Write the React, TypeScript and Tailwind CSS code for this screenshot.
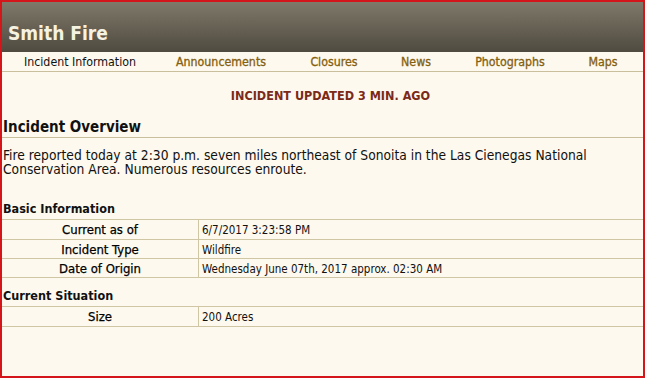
import React from "react";

const font = { fontFamily: '"DejaVu Sans Condensed", "DejaVu Sans", sans-serif' };

function Row({ label, value, h }: { label: string; value: string; h: string }) {
  return (
    <div className={`flex border-b border-[#cfc6a4] ${h}`}>
      <div className="w-[197px] text-center text-[13px] text-black [-webkit-text-stroke:0.25px_#000] border-r border-[#cfc6a4] h-full flex items-center justify-center pt-[1px]">
        {label}
      </div>
      <div className="flex-1 pl-[3px] text-[11.5px] h-full flex items-start pt-[2px]">{value}</div>
    </div>
  );
}

export default function App() {
  const tabs = [
    { t: "Incident Information", w: "w-[156px]", active: true },
    { t: "Announcements", w: "w-[126px]" },
    { t: "Closures", w: "w-[100px]" },
    { t: "News", w: "w-[64px]" },
    { t: "Photographs", w: "w-[124px]" },
    { t: "Maps", w: "w-[62px]" },
  ];
  return (
    <div
      style={font}
      className="w-[645px] h-[378px] border-2 border-[#d4161a] bg-[#fdf9ef] text-[#111] overflow-hidden flex flex-col"
    >
      <div className="h-[50px] bg-gradient-to-b from-[#7e7969] to-[#504b40] flex items-end pl-[6px] pb-[9px]">
        <span className="text-[#f6f2e2] font-bold text-[19px] leading-none">Smith Fire</span>
      </div>
      <div className="h-[20px] flex items-center border-b border-[#c9bf9c] text-[12.3px] pt-[1px]">
        {tabs.map((t) => (
          <div
            key={t.t}
            className={`${t.w} text-center ${t.active ? "text-[#111]" : "text-[#85600e] [-webkit-text-stroke:0.3px_#85600e]"}`}
          >
            {t.t}
          </div>
        ))}
      </div>
      <div className="mt-[17px] pl-[16px] text-center text-[#7b2a18] font-bold text-[12.5px] leading-[14px]">
        INCIDENT UPDATED 3 MIN. AGO
      </div>
      <div className="mt-[15px] pl-[1px] pb-[1px] border-b border-[#c9bf9c] font-bold text-[15px] leading-[18px]">
        Incident Overview
      </div>
      <div className="mt-[10px] pl-[1px] text-[13.7px] leading-[14px]">
        Fire reported today at 2:30 p.m. seven miles northeast of Sonoita in the Las Cienegas National
        Conservation Area. Numerous resources enroute.
      </div>
      <div className="mt-[25px] pl-[1px] font-bold text-[12.5px] leading-[16px] pb-[2px]">Basic Information</div>
      <div className="border-t border-[#cfc6a4]">
        <Row label="Current as of" value="6/7/2017 3:23:58 PM" h="h-[20px]" />
        <Row label="Incident Type" value="Wildfire" h="h-[19px]" />
        <Row label="Date of Origin" value="Wednesday June 07th, 2017 approx. 02:30 AM" h="h-[19px]" />
      </div>
      <div className="mt-[10px] pl-[1px] font-bold text-[12.5px] leading-[16px] pb-[2px]">Current Situation</div>
      <div className="border-t border-[#cfc6a4]">
        <Row label="Size" value="200 Acres" h="h-[20px]" />
      </div>
    </div>
  );
}
